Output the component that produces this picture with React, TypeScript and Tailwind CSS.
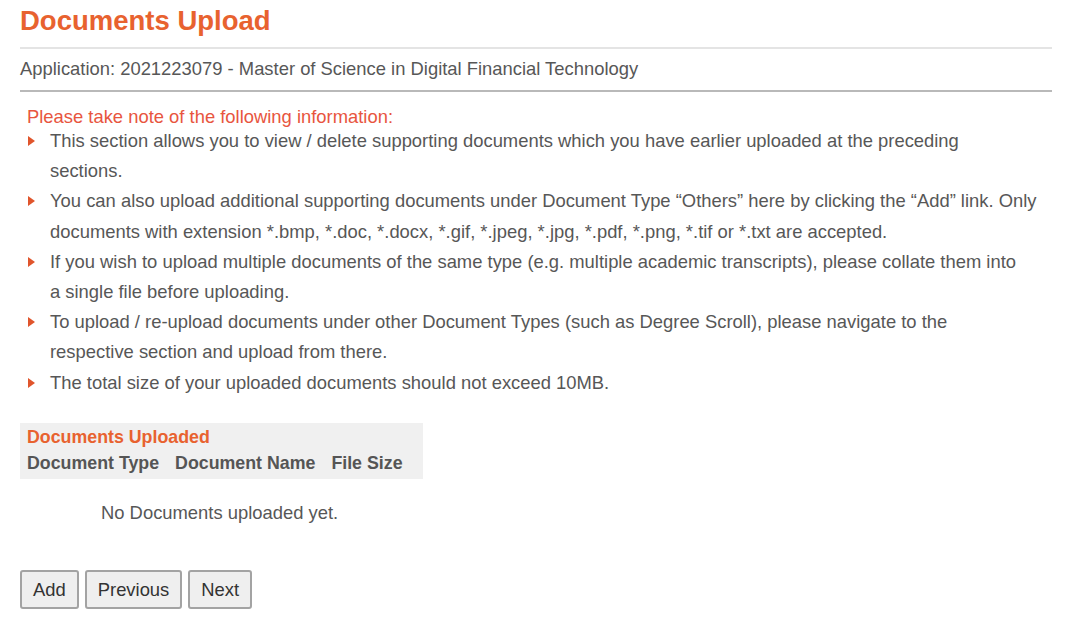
import React from "react";

const bullets: string[][] = [
  [
    "This section allows you to view / delete supporting documents which you have earlier uploaded at the preceding",
    "sections.",
  ],
  [
    "You can also upload additional supporting documents under Document Type \u201cOthers\u201d here by clicking the \u201cAdd\u201d link. Only",
    "documents with extension *.bmp, *.doc, *.docx, *.gif, *.jpeg, *.jpg, *.pdf, *.png, *.tif or *.txt are accepted.",
  ],
  [
    "If you wish to upload multiple documents of the same type (e.g. multiple academic transcripts), please collate them into",
    "a single file before uploading.",
  ],
  [
    "To upload / re-upload documents under other Document Types (such as Degree Scroll), please navigate to the",
    "respective section and upload from there.",
  ],
  ["The total size of your uploaded documents should not exceed 10MB."],
];

export default function App() {
  return (
    <div
      className="w-[1080px] h-[633px] bg-white overflow-hidden"
      style={{ fontFamily: '"Liberation Sans", Arial, sans-serif' }}
    >
      <div className="pl-[20px] w-[1052px]">
        <h1 className="text-[27.5px] font-bold text-[#e8622f] leading-[30px] pt-[6px] pb-[11px]">
          Documents Upload
        </h1>
        <div className="border-t-2 border-[#e4e4e4]" />
        <div className="text-[18.4px] text-[#575757] leading-[40px] h-[41px]">
          Application: 2021223079 - Master of Science in Digital Financial Technology
        </div>
        <div className="border-t-2 border-[#b9b9b9]" />
        <div className="pl-[7px] pt-[14px]">
          <div className="text-[18.4px] text-[#e8553e] leading-[22px]">
            Please take note of the following information:
          </div>
          <ul className="text-[18.4px] text-[#575757] leading-[30.2px] -mt-[2px]">
            {bullets.map((lines, i) => (
              <li key={i} className="flex">
                <span className="w-[23px] shrink-0 flex items-start pt-[10px] pl-[1px]">
                  <svg width="7" height="10" viewBox="0 0 7 10">
                    <polygon points="0,0 7,5 0,10" fill="#e0552c" />
                  </svg>
                </span>
                <span className="flex-1 flex flex-col">
                  {lines.map((l, j) => (
                    <span key={j} className="whitespace-nowrap">
                      {l}
                    </span>
                  ))}
                </span>
              </li>
            ))}
          </ul>
        </div>
        <div className="mt-[25px] w-[403px] bg-[#f0f0f0] pt-[3px] pb-[1px] px-[7px]">
          <div className="text-[17.8px] font-bold text-[#e8622f] leading-[22px]">
            Documents Uploaded
          </div>
          <div className="flex gap-[16px] text-[17.8px] font-bold text-[#555] leading-[30px]">
            <span>Document Type</span>
            <span>Document Name</span>
            <span>File Size</span>
          </div>
        </div>
        <div className="pl-[81px] text-[18.4px] text-[#575757] leading-[24px] mt-[22px]">
          No Documents uploaded yet.
        </div>
        <div className="flex gap-[6px] mt-[45px]">
          {["Add", "Previous", "Next"].map((t) => (
            <button
              key={t}
              className="h-[39px] px-[11px] bg-[#efefef] border-2 border-[#a3a3a3] rounded-[3px] text-[18.4px] text-[#333]"
              style={{ fontFamily: '"Liberation Sans", Arial, sans-serif' }}
            >
              {t}
            </button>
          ))}
        </div>
      </div>
    </div>
  );
}
